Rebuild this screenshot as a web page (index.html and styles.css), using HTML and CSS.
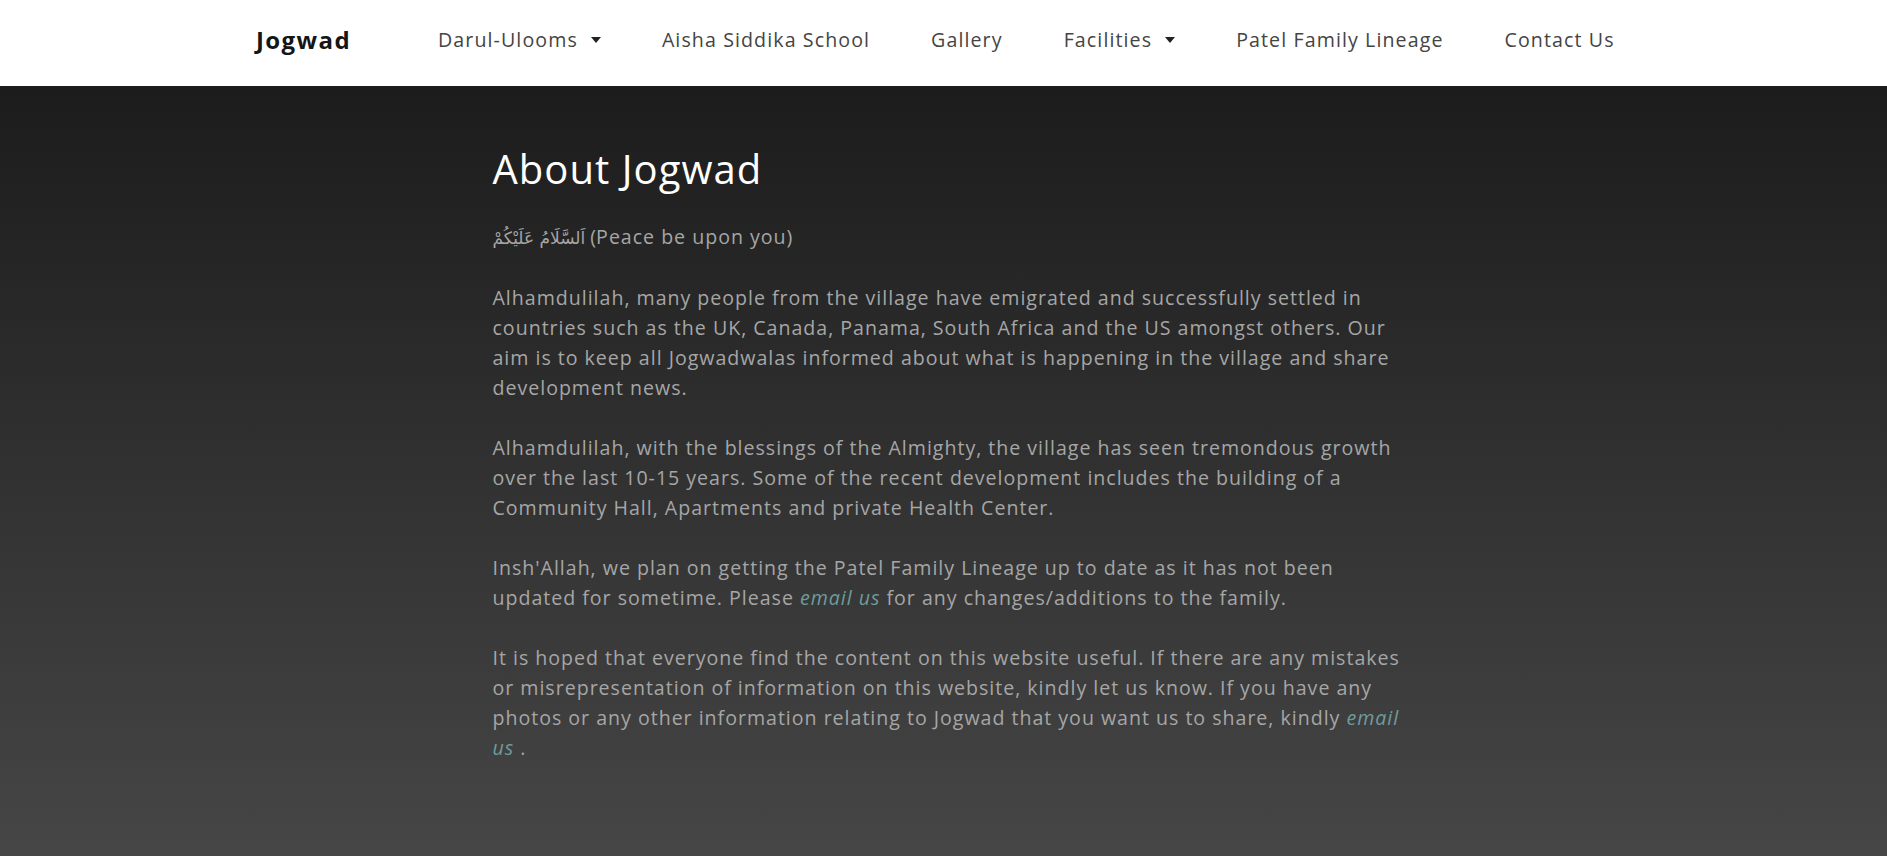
FILE: index.html
```html
<!DOCTYPE html>
<html lang="en">
<head>
<meta charset="utf-8">
<title>About Jogwad</title>
<link rel="stylesheet" href="styles.css">
</head>
<body>
<header class="navbar">
  <a class="brand" href="#">Jogwad</a>
  <nav>
    <ul class="nav-list">
      <li><a class="nav-link dropdown" href="#">Darul-Ulooms</a></li>
      <li><a class="nav-link" href="#">Aisha Siddika School</a></li>
      <li><a class="nav-link" href="#">Gallery</a></li>
      <li><a class="nav-link dropdown" href="#">Facilities</a></li>
      <li><a class="nav-link" href="#">Patel Family Lineage</a></li>
      <li><a class="nav-link" href="#">Contact Us</a></li>
    </ul>
  </nav>
</header>
<main class="hero">
  <section class="content">
    <h1 class="title">About Jogwad</h1>
    <p><span class="arabic" lang="ar" dir="rtl">اَلسَّلَامُ عَلَيْكُمْ</span> (Peace be upon you)</p>
    <p>Alhamdulilah, many people from the village have emigrated and successfully settled in countries such as the UK, Canada, Panama, South Africa and the US amongst others. Our aim is to keep all Jogwadwalas informed about what is happening in the village and share development news.</p>
    <p>Alhamdulilah, with the blessings of the Almighty, the village has seen tremondous growth over the last 10-15 years. Some of the recent development includes the building of a Community Hall, Apartments and private Health Center.</p>
    <p>Insh'Allah, we plan on getting the Patel Family Lineage up to date as it has not been updated for sometime. Please <a class="link" href="#">email us</a> for any changes/additions to the family.</p>
    <p>It is hoped that everyone find the content on this website useful. If there are any mistakes or misrepresentation of information on this website, kindly let us know. If you have any photos or any other information relating to Jogwad that you want us to share, kindly <a class="link" href="#">email us</a> .</p>
  </section>
</main>
</body>
</html>
```
FILE: styles.css
```css
* { box-sizing: border-box; }
html, body { margin: 0; padding: 0; height: 100%; }
body {
  font-family: "Open Sans", "DejaVu Sans", sans-serif;
  font-size: 19.6px;
  line-height: 30px;
  background: #464646;
}
.navbar {
  height: 86px;
  background: #ffffff;
  display: flex;
  align-items: center;
  padding-left: 256px;
  padding-bottom: 6px;
}
.brand {
  font-size: 24px;
  font-weight: 700;
  color: #151515;
  text-decoration: none;
  margin-right: 87px;
  letter-spacing: 1.4px;
}
.nav-list {
  list-style: none;
  margin: 0;
  padding: 0;
  display: flex;
  gap: 61px;
}
.nav-link {
  color: #444444;
  text-decoration: none;
  font-size: 19.6px;
  letter-spacing: 1.1px;
  display: inline-flex;
  align-items: center;
}
.dropdown::after {
  content: "";
  display: inline-block;
  margin-left: 13px;
  border-top: 6px solid #222;
  border-left: 5.5px solid transparent;
  border-right: 5.5px solid transparent;
}
.hero {
  min-height: calc(100vh - 86px);
  background: linear-gradient(180deg, #1c1c1c 0%, #464646 100%);
  padding-top: 59px;
  padding-bottom: 40px;
}
.content {
  width: 926px;
  padding-left: 12px;
  margin: 0 auto;
  color: #a6a6a6;
  letter-spacing: 0.98px;
}
.title {
  font-size: 40px;
  line-height: 48px;
  font-weight: 400;
  color: #ffffff;
  margin: 0 0 29px;
  letter-spacing: 1.05px;
}
.content p { margin: 0 0 30px; }
.arabic { font-family: "DejaVu Sans", sans-serif; font-size: 17px; letter-spacing: 0; }
.link { color: #6e9c9c; font-style: italic; text-decoration: none; }
```
